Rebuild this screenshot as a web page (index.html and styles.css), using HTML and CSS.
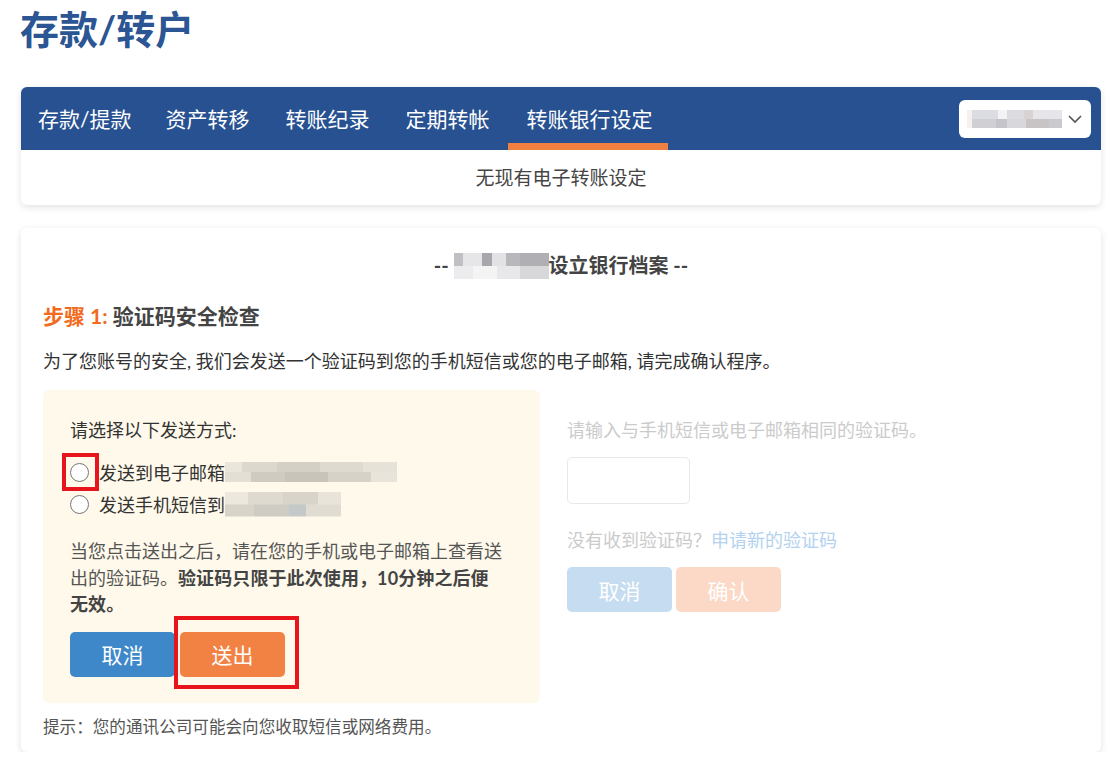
FILE: index.html
```html
<!DOCTYPE html>
<html lang="zh-CN">

    <head>
        <meta charset="UTF-8">
        <meta name="viewport" content="width=device-width, initial-scale=1.0">
        <title>存款/转户</title>
        <link rel="stylesheet" href="styles.css">
    </head>

    <body>
        <div class="page">
            <h1 class="page-title">存款/转户</h1>

            <div class="tabs-card">
                <div class="tab-bar">
                    <div class="tabs">
                        <a class="tab" href="#">存款/提款</a>
                        <a class="tab" href="#">资产转移</a>
                        <a class="tab" href="#">转账纪录</a>
                        <a class="tab" href="#">定期转帐</a>
                        <a class="tab active" href="#">转账银行设定</a>
                    </div>
                    <div class="account-select">
                        <span class="blur blur-select"></span>
                        <svg class="chevron" width="16" height="16" viewBox="0 0 16 16">
                            <path d="M2 5 L8 11 L14 5" fill="none" stroke="#555" stroke-width="1.6" />
                        </svg>
                    </div>
                </div>
                <div class="notice">无现有电子转账设定</div>
            </div>

            <div class="card">
                <h3 class="card-heading">-- <span class="blur blur-name"></span>设立银行档案 --</h3>
                <h4 class="step"><span class="step-num">步骤 1:</span> 验证码安全检查</h4>
                <p class="intro">为了您账号的安全, 我们会发送一个验证码到您的手机短信或您的电子邮箱, 请完成确认程序。</p>

                <div class="verify-row">
                    <div class="send-box">
                        <div class="send-title">请选择以下发送方式:</div>
                        <label class="radio-row">
                            <span class="radio-wrap">
                                <input type="radio" name="method">
                                <span class="mark mark-radio"></span>
                            </span>
                            发送到电子邮箱<span class="blur blur-email"></span>
                        </label>
                        <label class="radio-row">
                            <span class="radio-wrap">
                                <input type="radio" name="method">
                            </span>
                            发送手机短信到<span class="blur blur-phone"></span>
                        </label>
                        <p class="send-note">当您点击送出之后，请在您的手机或电子邮箱上查看送出的验证码。<b>验证码只限于此次使用，10分钟之后便无效。</b></p>
                        <div class="btn-row">
                            <button class="btn btn-blue">取消</button>
                            <span class="btn-wrap">
                                <button class="btn btn-orange">送出</button>
                                <span class="mark mark-send"></span>
                            </span>
                        </div>
                    </div>

                    <div class="code-box">
                        <div class="code-title">请输入与手机短信或电子邮箱相同的验证码。</div>
                        <input class="code-input" type="text" disabled>
                        <div class="resend">没有收到验证码？<a href="#">申请新的验证码</a></div>
                        <div class="btn-row">
                            <button class="btn btn-blue disabled">取消</button>
                            <button class="btn btn-orange disabled">确认</button>
                        </div>
                    </div>
                </div>

                <p class="hint">提示：您的通讯公司可能会向您收取短信或网络费用。</p>
            </div>
        </div>
    </body>

</html>
```

FILE: styles.css
```css
* {
    margin: 0;
    padding: 0;
    box-sizing: border-box;
}

body {
    font-family: "Lato", "Noto Sans CJK SC", sans-serif;
    background-color: #fff;
    color: #333;
}

.page {
    padding: 0 12px 0 21px;
}

.page-title {
    font-size: 39px;
    line-height: 50px;
    font-weight: bold;
    color: #2b5593;
    margin: 4px 0 0 -1px;
}

/* tabs */

.tabs-card {
    margin-top: 33px;
    border-radius: 6px;
    background: #fff;
    box-shadow: 0 2px 7px rgba(0, 0, 0, 0.12);
}

.tab-bar {
    display: flex;
    justify-content: space-between;
    align-items: center;
    height: 63px;
    background-color: #275191;
    border-radius: 6px 6px 0 0;
    padding-right: 10px;
}

.tabs {
    display: flex;
    height: 100%;
}

.tab {
    display: block;
    padding: 0 18px;
    line-height: 63px;
    font-size: 21px;
    color: #fff;
    text-decoration: none;
}

.tab:first-child {
    padding-left: 17px;
    padding-right: 16px;
}

.tab.active {
    padding-left: 19px;
    padding-right: 15px;
    box-shadow: inset 0 -7px 0 #f0803f;
}

.account-select {
    display: flex;
    align-items: center;
    justify-content: space-between;
    width: 132px;
    height: 38px;
    background: #fff;
    border-radius: 6px;
    padding: 0 8px 0 8px;
}

.notice {
    height: 55px;
    line-height: 55px;
    text-align: center;
    font-size: 19px;
    color: #444;
}

/* blurred personal data */

.blur {
    display: inline-block;
    vertical-align: middle;
    background-repeat: no-repeat;
    background-size: 100% 50%;
    background-position: top, bottom;
}

.blur-select {
    width: 95px;
    height: 18px;
    background-image:
        linear-gradient(to right, #f6f1ee 0 5%, #dcdde2 5% 33%, #f3f3f5 33% 42%, #dcdce0 42% 60%, #d8d2d2 60% 70%, #e6e6ea 70% 100%),
        linear-gradient(to right, #f6f1ee 0 5%, #cfcfd4 5% 30%, #c4c4ca 30% 42%, #d8d8dc 42% 62%, #c8c4c6 62% 86%, #cacace 86% 100%);
}

.blur-name {
    width: 95px;
    height: 26px;
    margin-top: -4px;
    background-image:
        linear-gradient(to right, #c0c0c4 0 10%, #e6e6e8 10% 30%, #a8a8ac 30% 40%, #e2e2e4 40% 55%, #b8b8bc 55% 70%, #b0b0b4 70% 100%),
        linear-gradient(to right, #ececee 0 20%, #f4f4f5 20% 45%, #e8e8ea 45% 70%, #d8d8da 70% 100%);
}

.blur-email {
    width: 172px;
    height: 20px;
    background-image:
        linear-gradient(to right, #ebe6dc 0 10%, #dcd8ce 10% 30%, #d4d0c6 30% 55%, #dedad0 55% 80%, #e6e2d8 80% 100%),
        linear-gradient(to right, #e4dfd4 0 15%, #d0cbc0 15% 35%, #c8c4ba 35% 60%, #d6d2c8 60% 85%, #e8e4da 85% 100%);
}

.blur-phone {
    width: 116px;
    height: 25px;
    background-image:
        linear-gradient(to right, #ece8de 0 20%, #dedad0 20% 50%, #d8d4ca 50% 80%, #e8e4da 80% 100%),
        linear-gradient(to right, #d8d4ca 0 25%, #cfccc4 25% 55%, #c4c8c8 55% 70%, #e0dcd2 70% 100%);
}

/* main card */

.card {
    margin-top: 23px;
    background: #fff;
    border-radius: 6px;
    box-shadow: 0 2px 7px rgba(0, 0, 0, 0.12);
    padding: 22px 22px 12px;
}

.card-heading {
    text-align: center;
    font-size: 20px;
    line-height: 30px;
    font-weight: bold;
    color: #444;
}

.step {
    margin-top: 21px;
    font-size: 21px;
    line-height: 30px;
    font-weight: bold;
    color: #444;
}

.step-num {
    color: #f26b1d;
}

.intro {
    margin-top: 17px;
    font-size: 18px;
    line-height: 27px;
    color: #333;
}

.verify-row {
    display: flex;
    gap: 27px;
    margin-top: 15px;
}

.send-box {
    width: 497px;
    flex-shrink: 0;
    background-color: #fef9ea;
    border-radius: 6px;
    padding: 27px 36px 26px 27px;
}

.send-title {
    font-size: 18px;
    line-height: 27px;
    color: #333;
}

.radio-row {
    display: flex;
    align-items: center;
    height: 32px;
    font-size: 18px;
    color: #333;
}

.send-title + .radio-row {
    margin-top: 12px;
}

.radio-wrap {
    position: relative;
    display: flex;
    margin-right: 10px;
}

.radio-row input {
    appearance: none;
    width: 19px;
    height: 19px;
    border: 1px solid #777;
    border-radius: 50%;
    background: #fff;
}

.send-note {
    margin-top: 18px;
    font-size: 18px;
    line-height: 26.5px;
    color: #555;
}

.send-note b {
    color: #444;
    letter-spacing: 0.1px;
}

.btn-row {
    display: flex;
    gap: 5px;
    margin-top: 14px;
}

.code-box .btn-row {
    gap: 4px;
    margin-top: 13px;
}

.btn {
    width: 105px;
    height: 45px;
    border: none;
    border-radius: 5px;
    font-family: inherit;
    font-size: 21px;
    color: #fff;
    cursor: pointer;
}

.btn-blue {
    background-color: #3e88c9;
}

.btn-orange {
    background-color: #f28244;
}

.btn-blue.disabled {
    background-color: #c6dcf0;
}

.btn-orange.disabled {
    background-color: #fbd9c6;
}

.btn-wrap {
    position: relative;
    display: flex;
}

/* red highlight marks */

.mark {
    position: absolute;
    border: 4px solid #e8141c;
    pointer-events: none;
}

.mark-radio {
    left: -8px;
    top: -10px;
    width: 37px;
    height: 38px;
}

.mark-send {
    left: -6px;
    top: -16px;
    width: 125px;
    height: 73px;
}

/* right column */

.code-box {
    padding-top: 27px;
}

.code-title {
    font-size: 18px;
    line-height: 27px;
    color: #cbcbcb;
}

.code-input {
    display: block;
    margin-top: 13px;
    width: 123px;
    height: 47px;
    border: 1px solid #e8e8e8;
    border-radius: 5px;
    background: #fff;
}

.resend {
    margin-top: 23px;
    font-size: 18px;
    line-height: 27px;
    color: #cbcbcb;
}

.resend a {
    color: #b3d2f0;
    text-decoration: none;
}

.hint {
    margin-top: 12px;
    font-size: 16.6px;
    line-height: 25px;
    color: #555;
}
```
